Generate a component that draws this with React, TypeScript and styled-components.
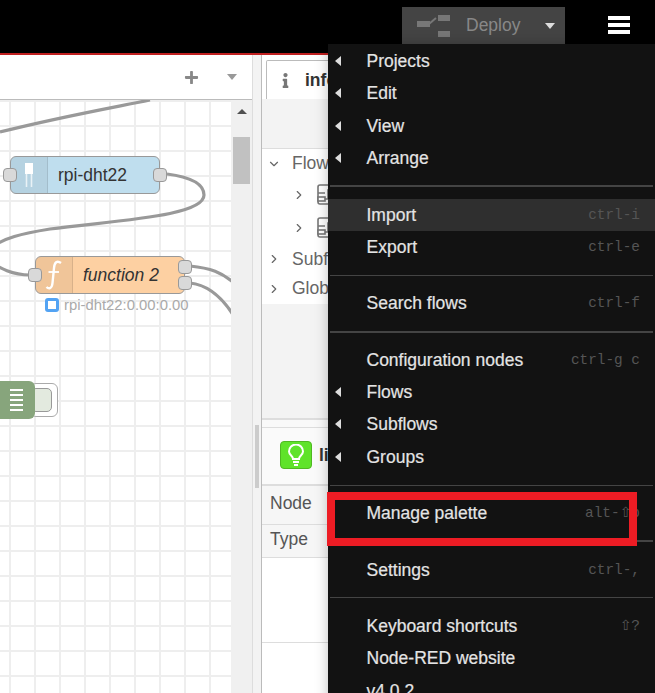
import styled, { createGlobalStyle } from 'styled-components';
import { ChevronDown, ChevronRight } from 'lucide-react';
import { FaInfo, FaPlus } from 'react-icons/fa';

const GlobalStyle = createGlobalStyle`
  html, body {
    margin: 0;
    padding: 0;
    background: #fff;
  }
  * {
    box-sizing: border-box;
  }
`;

const Page = styled.div`
  position: relative;
  width: 655px;
  height: 693px;
  overflow: hidden;
  display: flex;
  flex-direction: column;
  font-family: 'Liberation Sans', Arial, sans-serif;
  font-size: 17.5px;
  color: #555;
`;

const Header = styled.header`
  flex: none;
  height: 55px;
  background: #000;
  border-bottom: 2px solid #c02020;
  display: flex;
  justify-content: flex-end;
  align-items: flex-start;
  padding: 7px 25px 0 0;
`;

const DeployButton = styled.div`
  width: 163px;
  height: 37px;
  background: #444;
  display: flex;
  align-items: center;
  padding-left: 15px;
  color: #888;
  font-size: 17.5px;
`;

const DeployLabel = styled.span`
  margin-left: 15px;
  width: 79px;
`;

const DeployCaret = styled.span`
  width: 0;
  height: 0;
  border-left: 5.5px solid transparent;
  border-right: 5.5px solid transparent;
  border-top: 6px solid #ddd;
`;

const Hamburger = styled.div`
  width: 22px;
  height: 18px;
  margin: 9px 0 0 43px;
  display: flex;
  flex-direction: column;
  justify-content: space-between;
`;

const HamburgerBar = styled.span`
  height: 4px;
  background: #fff;
`;

const Body = styled.div`
  flex: 1;
  min-height: 0;
  display: flex;
`;

const Workspace = styled.section`
  flex: none;
  width: 252px;
  display: flex;
  flex-direction: column;
`;

const TabBar = styled.div`
  flex: none;
  height: 45px;
  background: #fff;
  border-bottom: 1px solid #bbb;
  display: flex;
  align-items: center;
  justify-content: flex-end;
  padding-right: 15px;
  color: #888;
`;

const TabCaret = styled.span`
  width: 0;
  height: 0;
  margin-left: 28px;
  border-left: 5.5px solid transparent;
  border-right: 5.5px solid transparent;
  border-top: 6px solid #999;
`;

const CanvasRow = styled.div`
  flex: 1;
  min-height: 0;
  display: flex;
`;

const Canvas = styled.div`
  position: relative;
  flex: none;
  width: 231px;
  overflow: hidden;
  background-color: #fff;
  background-image:
    linear-gradient(to right, #eee 2px, transparent 2px),
    linear-gradient(to bottom, #eee 2px, transparent 2px);
  background-size: 25px 25px;
  background-position: 9px 0;
`;

const Wires = styled.svg`
  position: absolute;
  left: 0;
  top: 0;
`;

const Wire = styled.path`
  fill: none;
  stroke: #999;
  stroke-width: 3.2;
`;

const Node = styled.div<{ $x: number; $y: number; $color: string }>`
  position: absolute;
  left: ${(p) => p.$x}px;
  top: ${(p) => p.$y}px;
  width: 150px;
  height: 38px;
  background: ${(p) => p.$color};
  border: 1px solid #999;
  border-radius: 6px;
  display: flex;
  align-items: center;
  color: #333;
`;

const NodeIcon = styled.div`
  width: 37px;
  height: 100%;
  flex: none;
  display: flex;
  align-items: center;
  justify-content: center;
  background: rgba(0, 0, 0, 0.05);
  border-right: 1px solid rgba(0, 0, 0, 0.1);
  border-radius: 5px 0 0 5px;
`;

const NodeLabel = styled.span<{ $italic?: boolean; $left: number }>`
  margin-left: ${(p) => p.$left}px;
  font-style: ${(p) => (p.$italic ? 'italic' : 'normal')};
  white-space: nowrap;
`;

const Port = styled.span<{ $x: number; $y: number }>`
  position: absolute;
  left: ${(p) => p.$x}px;
  top: ${(p) => p.$y}px;
  width: 14px;
  height: 14px;
  background: #d9d9d9;
  border: 1px solid #999;
  border-radius: 4px;
`;

const NodeStatus = styled.div`
  position: absolute;
  left: 45px;
  top: 197px;
  display: flex;
  align-items: center;
  gap: 5px;
  font-size: 14.85px;
  color: #aaa;
  white-space: nowrap;
`;

const StatusDot = styled.span`
  width: 14px;
  height: 14px;
  background: #fff;
  border: 3.5px solid #53a3f3;
  border-radius: 3px;
`;

const DebugNode = styled.div`
  position: absolute;
  left: -20px;
  top: 281px;
  width: 55px;
  height: 38px;
  background: #87a57c;
  border-radius: 6px;
  display: flex;
  align-items: center;
  justify-content: flex-end;
  padding-right: 12px;
`;

const DebugLines = styled.div`
  width: 13px;
  display: flex;
  flex-direction: column;
  gap: 3.5px;
`;

const DebugLine = styled.span`
  height: 1.5px;
  background: #fff;
`;

const DebugToggle = styled.div`
  position: absolute;
  left: 30px;
  top: 283px;
  width: 28px;
  height: 34px;
  background: #fff;
  border: 1px solid #aaa;
  border-radius: 6px;
  display: flex;
  align-items: center;
  padding-right: 5px;
`;

const DebugToggleFill = styled.span`
  width: 100%;
  height: 24px;
  background: #e3eadf;
  border: 1px solid #999;
  border-radius: 5px;
`;

const Scrollbar = styled.div`
  flex: 1;
  background: #f0f0f0;
  padding: 9px 2px 0;
  display: flex;
  flex-direction: column;
  align-items: center;
`;

const ScrollArrow = styled.span`
  width: 0;
  height: 0;
  border-left: 5px solid transparent;
  border-right: 5px solid transparent;
  border-bottom: 5px solid #505050;
`;

const ScrollThumb = styled.span`
  margin-top: 23px;
  width: 17px;
  height: 47px;
  background: #c1c1c1;
`;

const Separator = styled.div`
  flex: none;
  width: 10px;
  background: #f3f3f3;
  border-left: 1px solid #ddd;
  border-right: 1px solid #bbb;
  display: flex;
  padding: 370px 0 0 2px;
`;

const SeparatorHandle = styled.span`
  width: 4px;
  height: 63px;
  background: #ccc;
`;

const Sidebar = styled.aside`
  flex: 1;
  min-width: 0;
  display: flex;
  flex-direction: column;
  background: #fff;
`;

const SidebarTabs = styled.div`
  flex: none;
  height: 44px;
  background: #fff;
  padding: 5px 0 0 4px;
`;

const SidebarTab = styled.div`
  height: 39px;
  border: 1px solid #bbb;
  border-bottom: none;
  border-radius: 2px 0 0 0;
  display: flex;
  align-items: center;
  padding-left: 11px;
  color: #777;
`;

const SidebarTabLabel = styled.span`
  margin-left: 12px;
  font-weight: bold;
  color: #333;
`;

const InfoToolbar = styled.div`
  flex: none;
  height: 50px;
  background: #f3f3f3;
  border-bottom: 1px solid #ddd;
`;

const Tree = styled.div`
  flex: none;
  height: 155px;
  background: #fff;
`;

const TreeRow = styled.div<{ $depth: number; $height: number }>`
  height: ${(p) => p.$height}px;
  display: flex;
  align-items: center;
  padding-left: ${(p) => 5 + p.$depth * 25}px;
  color: #666;
  white-space: nowrap;
  gap: 11px;
`;

const InfoGap = styled.div`
  flex: none;
  height: 116px;
  background: #f3f3f3;
  border-bottom: 2px solid #ddd;
`;

const InfoStrip = styled.div`
  flex: none;
  height: 8px;
  background: #f9f9f9;
  border-bottom: 1px solid #ddd;
`;

const NodeHeading = styled.div`
  flex: none;
  height: 58px;
  display: flex;
  align-items: center;
  padding: 0 0 2px 18px;
  background: #fafafa;
  border-bottom: 2px solid #ddd;
  font-weight: bold;
  color: #333;
  gap: 7px;
`;

const BulbBadge = styled.span`
  width: 32px;
  height: 28px;
  background: #5fe32a;
  border: 1px solid #4fb822;
  border-radius: 4px;
  display: flex;
  align-items: center;
  justify-content: center;
`;

const InfoRow = styled.div<{ $height: number }>`
  flex: none;
  height: ${(p) => p.$height}px;
  padding: 0 0 4px 8px;
  display: flex;
  align-items: center;
  background: #f6f6f6;
  border-bottom: 1px solid #ddd;
`;

const InfoBlank = styled.div`
  flex: none;
  height: 85px;
  background: #fff;
  border-bottom: 1px solid #ddd;
`;

const Menu = styled.nav`
  position: absolute;
  left: 328px;
  top: 44px;
  width: 327px;
  height: 660px;
  padding-top: 1.15px;
  background: #121212;
  box-shadow: 0 0 12px rgba(0, 0, 0, 0.25);
  color: #e4e4e4;
`;

const MenuItem = styled.div<{ $active?: boolean }>`
  position: relative;
  height: 32.33px;
  line-height: 32px;
  padding: 0 15px 0 38.5px;
  display: flex;
  justify-content: space-between;
  background: ${(p) => (p.$active ? '#2f2f2f' : 'transparent')};
  white-space: nowrap;
  -webkit-text-stroke: 0.2px #e4e4e4;
`;

const SubmenuArrow = styled.span`
  position: absolute;
  left: 7px;
  top: 11px;
  width: 0;
  height: 0;
  border-top: 5.5px solid transparent;
  border-bottom: 5.5px solid transparent;
  border-right: 6px solid #ddd;
`;

const Shortcut = styled.span`
  font-family: 'Liberation Mono', 'DejaVu Sans Mono', monospace;
  font-size: 14.4px;
  color: #555;
  -webkit-text-stroke: 0;
`;

const ShiftKey = styled.span`
  font-family: 'DejaVu Sans', sans-serif;
  font-size: 14px;
  line-height: 1;
`;

const MenuDivider = styled.hr<{ $thick?: boolean }>`
  height: ${(p) => (p.$thick ? 2 : 1)}px;
  margin: ${(p) => (p.$thick ? 11 : 11.55)}px 2px ${(p) => (p.$thick ? 11.1 : 11.55)}px;
  border: none;
  background: #444;
`;

const Highlight = styled.div`
  position: absolute;
  left: 327px;
  top: 492px;
  width: 310px;
  height: 54px;
  border: 8px solid #ed1c24;
`;

type Entry =
  | { divider: true; thick?: boolean }
  | { label: string; shortcut?: string; shifted?: [string, string]; submenu?: boolean; active?: boolean };

const menuEntries: Entry[] = [
  { label: 'Projects', submenu: true },
  { label: 'Edit', submenu: true },
  { label: 'View', submenu: true },
  { label: 'Arrange', submenu: true },
  { divider: true, thick: true },
  { label: 'Import', shortcut: 'ctrl-i', active: true },
  { label: 'Export', shortcut: 'ctrl-e' },
  { divider: true },
  { label: 'Search flows', shortcut: 'ctrl-f' },
  { divider: true, thick: true },
  { label: 'Configuration nodes', shortcut: 'ctrl-g c' },
  { label: 'Flows', submenu: true },
  { label: 'Subflows', submenu: true },
  { label: 'Groups', submenu: true },
  { divider: true },
  { label: 'Manage palette', shifted: ['alt-', 'p'] },
  { divider: true, thick: true },
  { label: 'Settings', shortcut: 'ctrl-,' },
  { divider: true },
  { label: 'Keyboard shortcuts', shifted: ['', '?'] },
  { label: 'Node-RED website' },
  { label: 'v4.0.2' },
];

const DeployIcon = () => (
  <svg width="34" height="22" viewBox="0 0 34 22">
    <rect x="0" y="6" width="13" height="6" fill="#777" />
    <path d="M12 9 L19 3" stroke="#777" strokeWidth="2" fill="none" />
    <rect x="21" y="0" width="12" height="6" fill="#777" />
    <rect x="21" y="16" width="12" height="6" fill="#777" />
  </svg>
);

const FlowIcon = () => (
  <svg width="20" height="21" viewBox="0 0 20 21" fill="none" stroke="#777" strokeWidth="1.6">
    <rect x="1" y="1" width="18" height="19" rx="2" />
    <rect x="12" y="4" width="7" height="4" fill="#fff" />
    <rect x="1" y="13" width="7" height="4" fill="#fff" />
    <path d="M8 15 H11 V6 H12 M1 9 H8" />
  </svg>
);

const BulbIcon = () => (
  <svg width="16" height="22" viewBox="0 0 16 22" fill="none" stroke="#fff" strokeWidth="2">
    <path d="M5 15 C5 12 1 11 1 7.5 A7 7 0 0 1 15 7.5 C15 11 11 12 11 15 Z" />
    <path d="M5 18 H11 M6 21 H10" />
  </svg>
);

const SensorIcon = () => (
  <svg width="10" height="24" viewBox="0 0 10 24" fill="none">
    <rect x="1" y="0" width="8" height="11" fill="#fff" />
    <path d="M2.5 11 V24 M7.5 11 V24" stroke="#fff" strokeOpacity="0.7" strokeWidth="1.6" />
  </svg>
);

const FunctionIcon = () => (
  <svg width="18" height="30" viewBox="0 0 18 30" fill="none" stroke="#fff" strokeWidth="2.4">
    <path d="M16 3 C12 0 9.5 2.5 9 8 L7.5 23 C7 28.5 4 29.5 1.5 27" />
    <path d="M3.5 12 H14" strokeWidth="1.8" />
  </svg>
);

export default function App() {
  return (
    <Page>
      <GlobalStyle />
      <Header>
        <DeployButton>
          <DeployIcon />
          <DeployLabel>Deploy</DeployLabel>
          <DeployCaret />
        </DeployButton>
        <Hamburger>
          <HamburgerBar />
          <HamburgerBar />
          <HamburgerBar />
        </Hamburger>
      </Header>
      <Body>
        <Workspace>
          <TabBar>
            <FaPlus size={15} />
            <TabCaret />
          </TabBar>
          <CanvasRow>
            <Canvas>
              <Wires width="231" height="593" viewBox="0 100 231 593">
                <Wire d="M0 132 C60 117 100 110 150 100" />
                <Wire d="M167 174 C190 177 204 184 204 195 C204 216 120 220 50 229 C25 233 0 238 -10 250" />
                <Wire d="M-10 262 C0 268 12 275 30 275" />
                <Wire d="M190 266 C210 268 222 272 235 284" />
                <Wire d="M190 283 C208 285 222 296 235 318" />
              </Wires>
              <Node $x={10} $y={56} $color="#bfdeee">
                <NodeIcon>
                  <SensorIcon />
                </NodeIcon>
                <NodeLabel $left={10}>rpi-dht22</NodeLabel>
              </Node>
              <Port $x={3} $y={68} />
              <Port $x={153} $y={68} />
              <Node $x={35} $y={156} $color="#fdd0a2">
                <NodeIcon>
                  <FunctionIcon />
                </NodeIcon>
                <NodeLabel $italic $left={10}>function 2</NodeLabel>
              </Node>
              <Port $x={28} $y={168} />
              <Port $x={178} $y={160} />
              <Port $x={178} $y={176} />
              <NodeStatus>
                <StatusDot />
                rpi-dht22:0.00:0.00
              </NodeStatus>
              <DebugToggle>
                <DebugToggleFill />
              </DebugToggle>
              <DebugNode>
                <DebugLines>
                  <DebugLine />
                  <DebugLine />
                  <DebugLine />
                  <DebugLine />
                  <DebugLine />
                </DebugLines>
              </DebugNode>
            </Canvas>
            <Scrollbar>
              <ScrollArrow />
              <ScrollThumb />
            </Scrollbar>
          </CanvasRow>
        </Workspace>
        <Separator>
          <SeparatorHandle />
        </Separator>
        <Sidebar>
          <SidebarTabs>
            <SidebarTab>
              <FaInfo size={15} />
              <SidebarTabLabel>info</SidebarTabLabel>
            </SidebarTab>
          </SidebarTabs>
          <InfoToolbar />
          <Tree>
            <TreeRow $depth={0} $height={29}>
              <ChevronDown size={14} />
              Flows
            </TreeRow>
            <TreeRow $depth={1} $height={33}>
              <ChevronRight size={14} />
              <FlowIcon />
            </TreeRow>
            <TreeRow $depth={1} $height={33}>
              <ChevronRight size={14} />
              <FlowIcon />
            </TreeRow>
            <TreeRow $depth={0} $height={30}>
              <ChevronRight size={14} />
              Subflows
            </TreeRow>
            <TreeRow $depth={0} $height={29}>
              <ChevronRight size={14} />
              Global
            </TreeRow>
          </Tree>
          <InfoGap />
          <InfoStrip />
          <NodeHeading>
            <BulbBadge>
              <BulbIcon />
            </BulbBadge>
            light
          </NodeHeading>
          <InfoRow $height={39}>Node</InfoRow>
          <InfoRow $height={33}>Type</InfoRow>
          <InfoBlank />
        </Sidebar>
      </Body>
      <Menu>
        {menuEntries.map((entry, index) =>
          'divider' in entry ? (
            <MenuDivider key={index} $thick={entry.thick} />
          ) : (
            <MenuItem key={index} $active={entry.active}>
              {entry.submenu && <SubmenuArrow />}
              <span>{entry.label}</span>
              {entry.shortcut && <Shortcut>{entry.shortcut}</Shortcut>}
              {entry.shifted && (
                <Shortcut>
                  {entry.shifted[0]}
                  <ShiftKey>⇧</ShiftKey>
                  {entry.shifted[1]}
                </Shortcut>
              )}
            </MenuItem>
          ),
        )}
      </Menu>
      <Highlight />
    </Page>
  );
}
